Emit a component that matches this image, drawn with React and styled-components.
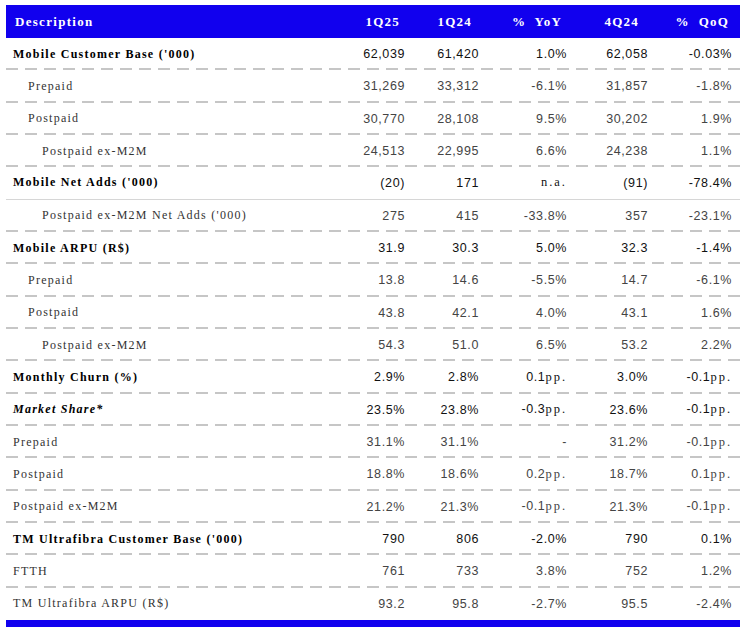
import React from "react";
import styled, { createGlobalStyle, css } from "styled-components";

const Global = createGlobalStyle`
  html, body { margin: 0; padding: 0; background: #fff; }
  body { font-family: "Liberation Serif", serif; }
`;

const BLUE = "#1100ee";
const COLS = "314px 90px 74px 88px 81px 87px";
const VALUE_PAD = [5, 5, 5, 5, 8];
const HEAD_PAD = [10, 12, 10, 14, 11];

const Page = styled.div`
  padding: 5px 0 0 6px;
  width: 734px;
  height: 622px;
  overflow: hidden;
`;

const HeaderRow = styled.div`
  display: grid;
  grid-template-columns: ${COLS};
  height: 33px;
  align-items: center;
  background: ${BLUE};
  color: #fff;
`;

const HeadCell = styled.div`
  font-family: "Liberation Serif", serif;
  font-weight: bold;
  font-size: 13px;
  white-space: pre;
  text-align: ${(p) => (p.$first ? "left" : "right")};
  padding-left: ${(p) => (p.$first ? "9px" : "0")};
  padding-right: ${(p) => p.$pad || 0}px;
  letter-spacing: ${(p) => (p.$first ? "1.3px" : "1.2px")};
`;

const borderStyles = {
  dashed: css`
    background-image: repeating-linear-gradient(
      to right,
      #c6c6c6 0 12px,
      transparent 12px 19px
    );
    background-size: 100% 2px;
    background-position: left bottom;
    background-repeat: no-repeat;
  `,
  solid: css`
    border-bottom: 1px solid #d6d6d6;
  `,
  none: css``,
};

const Row = styled.div`
  display: grid;
  grid-template-columns: ${COLS};
  height: 32.33px;
  box-sizing: border-box;
  align-items: center;
  ${(p) => borderStyles[p.$border]}
`;

const Label = styled.div`
  font-family: "Liberation Serif", serif;
  font-size: 12px;
  letter-spacing: 1.25px;
  white-space: pre;
  color: ${(p) => (p.$bold ? "#000" : "#333")};
  font-weight: ${(p) => (p.$bold ? "bold" : "normal")};
  font-style: ${(p) => (p.$italic ? "italic" : "normal")};
  padding-left: ${(p) => [7, 22, 36][p.$indent]}px;
`;

const Value = styled.div`
  font-family: "Liberation Sans", Arial, sans-serif;
  font-size: 12.5px;
  letter-spacing: 0.6px;
  text-align: right;
  white-space: pre;
  color: ${(p) => (p.$bold ? "#111" : "#444")};
  padding-right: ${(p) => p.$pad}px;
`;

const Unit = styled.span`
  font-family: "Liberation Serif", serif;
  font-size: 12.5px;
  letter-spacing: 2px;
`;

const BottomBar = styled.div`
  height: 8px;
  background: ${BLUE};
`;

const rows = [
  { l: "Mobile Customer Base ('000)", v: ["62,039", "61,420", "1.0%", "62,058", "-0.03%"], b: 1, i: 0 },
  { l: "Prepaid", v: ["31,269", "33,312", "-6.1%", "31,857", "-1.8%"], i: 1 },
  { l: "Postpaid", v: ["30,770", "28,108", "9.5%", "30,202", "1.9%"], i: 1 },
  { l: "Postpaid ex-M2M", v: ["24,513", "22,995", "6.6%", "24,238", "1.1%"], i: 2 },
  { l: "Mobile Net Adds ('000)", v: ["(20)", "171", "n.a.", "(91)", "-78.4%"], b: 1, i: 0, border: "solid" },
  { l: "Postpaid ex-M2M Net Adds ('000)", v: ["275", "415", "-33.8%", "357", "-23.1%"], i: 2 },
  { l: "Mobile ARPU (R$)", v: ["31.9", "30.3", "5.0%", "32.3", "-1.4%"], b: 1, i: 0 },
  { l: "Prepaid", v: ["13.8", "14.6", "-5.5%", "14.7", "-6.1%"], i: 1 },
  { l: "Postpaid", v: ["43.8", "42.1", "4.0%", "43.1", "1.6%"], i: 1 },
  { l: "Postpaid ex-M2M", v: ["54.3", "51.0", "6.5%", "53.2", "2.2%"], i: 2 },
  { l: "Monthly Churn (%)", v: ["2.9%", "2.8%", "0.1pp.", "3.0%", "-0.1pp."], b: 1, i: 0 },
  { l: "Market Share*", v: ["23.5%", "23.8%", "-0.3pp.", "23.6%", "-0.1pp."], b: 1, it: 1, i: 0 },
  { l: "Prepaid", v: ["31.1%", "31.1%", "-", "31.2%", "-0.1pp."], i: 0 },
  { l: "Postpaid", v: ["18.8%", "18.6%", "0.2pp.", "18.7%", "0.1pp."], i: 0 },
  { l: "Postpaid ex-M2M", v: ["21.2%", "21.3%", "-0.1pp.", "21.3%", "-0.1pp."], i: 0 },
  { l: "TM Ultrafibra Customer Base ('000)", v: ["790", "806", "-2.0%", "790", "0.1%"], b: 1, i: 0 },
  { l: "FTTH", v: ["761", "733", "3.8%", "752", "1.2%"], i: 0 },
  { l: "TM Ultrafibra ARPU (R$)", v: ["93.2", "95.8", "-2.7%", "95.5", "-2.4%"], i: 0, border: "none" },
];

function renderValue(text) {
  if (text.endsWith("pp.")) {
    return (
      <>
        {text.slice(0, -3)}
        <Unit>pp.</Unit>
      </>
    );
  }
  if (text === "n.a.") return <Unit>n.a.</Unit>;
  return text;
}

const headers = ["1Q25", "1Q24", "%  YoY", "4Q24", "%  QoQ"];

export default function App() {
  return (
    <>
      <Global />
      <Page>
        <HeaderRow>
          <HeadCell $first>Description</HeadCell>
          {headers.map((h, k) => (
            <HeadCell key={h} $pad={HEAD_PAD[k]}>
              {h}
            </HeadCell>
          ))}
        </HeaderRow>
        {rows.map((r, idx) => (
          <Row key={idx} $border={r.border || "dashed"}>
            <Label $bold={!!r.b} $italic={!!r.it} $indent={r.i}>
              {r.l}
            </Label>
            {r.v.map((v, k) => (
              <Value key={k} $bold={!!r.b} $pad={VALUE_PAD[k]}>
                {renderValue(v)}
              </Value>
            ))}
          </Row>
        ))}
        <BottomBar />
      </Page>
    </>
  );
}
